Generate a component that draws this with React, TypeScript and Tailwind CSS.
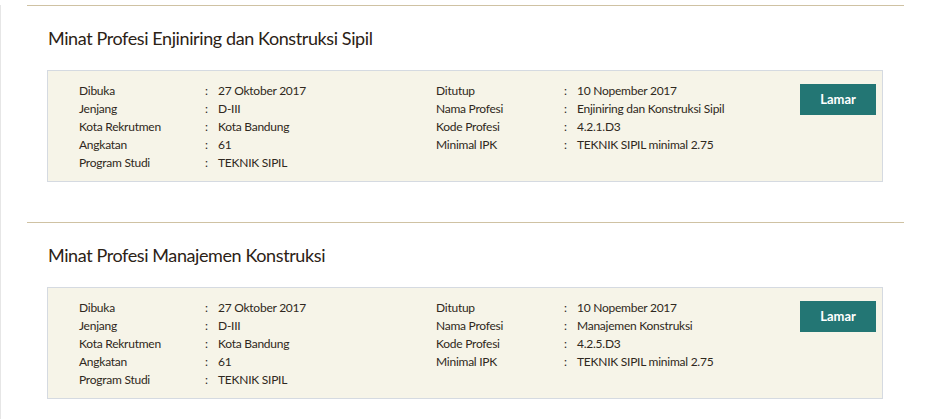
import React from "react"

type Item = {
  title: string
  left: [string, string][]
  right: [string, string][]
}

const items: Item[] = [
  {
    title: "Minat Profesi Enjiniring dan Konstruksi Sipil",
    left: [
      ["Dibuka", "27 Oktober 2017"],
      ["Jenjang", "D-III"],
      ["Kota Rekrutmen", "Kota Bandung"],
      ["Angkatan", "61"],
      ["Program Studi", "TEKNIK SIPIL"],
    ],
    right: [
      ["Ditutup", "10 Nopember 2017"],
      ["Nama Profesi", "Enjiniring dan Konstruksi Sipil"],
      ["Kode Profesi", "4.2.1.D3"],
      ["Minimal IPK", "TEKNIK SIPIL minimal 2.75"],
    ],
  },
  {
    title: "Minat Profesi Manajemen Konstruksi",
    left: [
      ["Dibuka", "27 Oktober 2017"],
      ["Jenjang", "D-III"],
      ["Kota Rekrutmen", "Kota Bandung"],
      ["Angkatan", "61"],
      ["Program Studi", "TEKNIK SIPIL"],
    ],
    right: [
      ["Ditutup", "10 Nopember 2017"],
      ["Nama Profesi", "Manajemen Konstruksi"],
      ["Kode Profesi", "4.2.5.D3"],
      ["Minimal IPK", "TEKNIK SIPIL minimal 2.75"],
    ],
  },
]

function Rows({ rows, labelW }: { rows: [string, string][]; labelW: string }) {
  return (
    <div className="flex flex-col">
      {rows.map(([label, value]) => (
        <div key={label} className="flex h-[18px] items-center">
          <span className={labelW}>{label}</span>
          <span className="w-[13px]">:</span>
          <span>{value}</span>
        </div>
      ))}
    </div>
  )
}

function App() {
  return (
    <div
      className="min-h-screen w-full bg-white border-l border-[#e6e6e6] pl-[26px] pr-[29px] text-[#2f2820]"
      style={{ fontFamily: "Lato, 'Open Sans', sans-serif" }}
    >
      {items.map((item) => (
        <section key={item.title} className="mt-[5px] border-t border-[#cfc2a3] pb-[35px]">
          <h2 className="pt-[20px] pl-[21px] text-[18px] leading-[24px] tracking-[-0.4px] text-[#2c2216]">
            {item.title}
          </h2>
          <div className="mt-[20px] ml-[20px] mr-[21px] flex h-[112px] border border-[#d5dae1] bg-[#f6f4e8] pl-[31px] pt-[11px] text-[12px] tracking-[-0.25px]">
            <div className="w-[357px]">
              <Rows rows={item.left} labelW="w-[126px]" />
            </div>
            <div className="flex-1">
              <Rows rows={item.right} labelW="w-[128px]" />
            </div>
            <div className="pt-[2px] pr-[6px]">
              <button className="h-[31px] w-[76px] bg-[#237674] text-[13px] font-bold tracking-normal text-white">
                Lamar
              </button>
            </div>
          </div>
        </section>
      ))}
    </div>
  )
}

export default App
